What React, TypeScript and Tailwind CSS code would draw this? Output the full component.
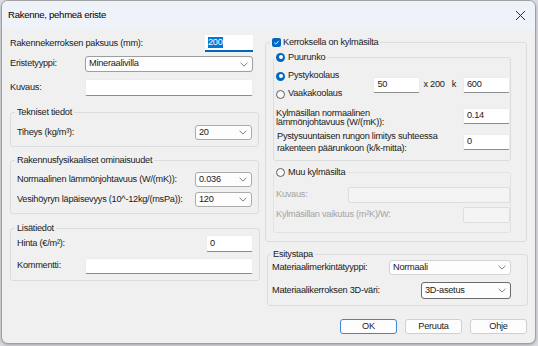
import React from "react";

function Chevron() {
  return (
    <svg width="8" height="5" viewBox="0 0 8 5" className="shrink-0">
      <path d="M0.6 0.8 L4 4.1 L7.4 0.8" fill="none" stroke="#707070" strokeWidth="0.9" />
    </svg>
  );
}

function Select({ value, className }: { value: string; className: string }) {
  return (
    <div className={`flex items-center justify-between bg-[#fdfdfd] rounded-[3px] pl-[3px] pr-[4px] ${className}`}>
      <span>{value}</span>
      <Chevron />
    </div>
  );
}

function TextBox({ value, className }: { value: string; className: string }) {
  return (
    <div className={`flex items-center bg-white border border-[#ececec] border-b-[#8c8c8c] rounded-[2px] px-[3px] ${className}`}>
      {value}
    </div>
  );
}

function Radio({ checked }: { checked: boolean }) {
  return checked ? (
    <span className="w-[9px] h-[9px] rounded-full bg-[#0067c0] flex items-center justify-center shrink-0">
      <span className="w-[4px] h-[4px] rounded-full bg-white" />
    </span>
  ) : (
    <span className="w-[9px] h-[9px] rounded-full border border-[#5e5e5e] bg-[#f7f7f7] shrink-0" />
  );
}

function Checkbox() {
  return (
    <span className="w-[9px] h-[9px] rounded-[2px] bg-[#0067c0] flex items-center justify-center shrink-0">
      <svg width="7" height="7" viewBox="0 0 7 7">
        <path d="M1.2 3.6 L2.8 5.1 L5.8 1.8" fill="none" stroke="#fff" strokeWidth="0.9" />
      </svg>
    </span>
  );
}

export default function App() {
  return (
    <div className="w-[538px] h-[346px] bg-[#dadbe0] overflow-hidden font-['Liberation_Sans',Arial,sans-serif] text-[9.2px] tracking-[-0.25px] text-[#1a1a1a]">
      <div className="ml-[1px] w-[535px] h-[344px] flex flex-col bg-[#f0f0f0] border border-[#a0a0a0] rounded-[7px] overflow-hidden shadow-[0_1px_3px_rgba(0,0,0,0.25)]">
        {/* Title bar */}
        <div className="h-[28px] shrink-0 bg-[#eef3f9] flex items-center justify-between pl-[6px] pr-[8px]">
          <span className="text-[9.6px] tracking-[-0.3px] text-black">Rakenne, pehmeä eriste</span>
          <svg width="11" height="11" viewBox="0 0 11 11" className="mr-[1px]">
            <path d="M1 1 L10 10 M10 1 L1 10" stroke="#2b2b2b" strokeWidth="1" />
          </svg>
        </div>

        {/* Body */}
        <div className="flex items-start gap-[6px] pl-[8px]">
          {/* Left column */}
          <div className="w-[249px] pt-[6px] flex flex-col">
            <div className="h-[17px] flex items-center justify-between pr-[6px]">
              <span>Rakennekerroksen paksuus (mm):</span>
              <div className="w-[48px] h-[17px] bg-white border-b-2 border-[#0067c0] flex items-center px-[3px]">
                <span className="bg-[#0078d7] text-white leading-[11px]">200</span>
              </div>
            </div>
            <div className="mt-[4px] h-[16px] flex items-center">
              <span className="w-[75px]">Eristetyyppi:</span>
              <Select value="Mineraalivilla" className="w-[168px] h-[16px] border border-[#9e9e9e]" />
            </div>
            <div className="mt-[7px] h-[17px] flex items-center">
              <span className="w-[75px]">Kuvaus:</span>
              <TextBox value="" className="w-[168px] h-[17px]" />
            </div>

            <fieldset className="mt-[9px] border border-[#dcdcdc] rounded-[3px]">
              <legend className="ml-[4px] px-[2px] leading-[14px]">Tekniset tiedot</legend>
              <div className="px-[6px] pt-[6px] pb-[6px]">
                <div className="h-[15px] flex items-center justify-between">
                  <span>Tiheys (kg/m³):</span>
                  <Select value="20" className="w-[57px] h-[15px] border border-[#ababab]" />
                </div>
              </div>
            </fieldset>

            <fieldset className="mt-[6px] border border-[#dcdcdc] rounded-[3px]">
              <legend className="ml-[4px] px-[2px] leading-[14px]">Rakennusfysikaaliset ominaisuudet</legend>
              <div className="px-[6px] pt-[5px] pb-[6px] flex flex-col gap-[5px]">
                <div className="h-[15px] flex items-center justify-between">
                  <span>Normaalinen lämmönjohtavuus (W/(mK)):</span>
                  <Select value="0.036" className="w-[57px] h-[15px] border border-[#ababab]" />
                </div>
                <div className="h-[15px] flex items-center justify-between">
                  <span>Vesihöyryn läpäisevyys (10^-12kg/(msPa)):</span>
                  <Select value="120" className="w-[57px] h-[15px] border border-[#ababab]" />
                </div>
              </div>
            </fieldset>

            <fieldset className="mt-[7px] border border-[#dcdcdc] rounded-[3px]">
              <legend className="ml-[4px] px-[2px] leading-[14px]">Lisätiedot</legend>
              <div className="px-[6px] pb-[6px] flex flex-col gap-[6px]">
                <div className="h-[17px] flex items-center justify-between">
                  <span>Hinta (€/m²):</span>
                  <TextBox value="0" className="w-[47px] h-[17px]" />
                </div>
                <div className="h-[16px] flex items-center">
                  <span className="w-[68px]">Kommentti:</span>
                  <TextBox value="" className="w-[168px] h-[16px]" />
                </div>
              </div>
            </fieldset>
          </div>

          {/* Right column */}
          <div className="w-[262px] pt-[7px] flex flex-col">
            <fieldset className="border border-[#dcdcdc] rounded-[3px]">
              <legend className="ml-[4px] px-[2px] leading-[12px]">
                <span className="flex items-center gap-[2px]">
                  <Checkbox />
                  <span>Kerroksella on kylmäsilta</span>
                </span>
              </legend>
              <div className="pl-[7px] pr-[15px] pt-[3px] pb-[8px] flex flex-col">
                <fieldset className="border border-[#dcdcdc] rounded-[3px]">
                  <legend className="px-[2px] leading-[12px]">
                    <span className="flex items-center gap-[3px]">
                      <Radio checked />
                      <span>Puurunko</span>
                    </span>
                  </legend>
                  <div className="pl-[2px] pt-[4px] pb-[6px] flex flex-col">
                    <div className="flex items-center justify-between">
                      <div className="flex flex-col">
                        <div className="h-[18px] flex items-center gap-[3px]">
                          <Radio checked />
                          <span>Pystykoolaus</span>
                        </div>
                        <div className="h-[18px] flex items-center gap-[3px]">
                          <Radio checked={false} />
                          <span>Vaakakoolaus</span>
                        </div>
                      </div>
                      <div className="flex items-center">
                        <TextBox value="50" className="w-[47px] h-[16px]" />
                        <span className="ml-[3px]">x 200</span>
                        <span className="ml-[7px]">k</span>
                        <TextBox value="600" className="ml-[7px] w-[47px] h-[16px]" />
                      </div>
                    </div>
                    <div className="mt-[5px] flex items-start justify-between">
                      <span className="leading-[9px] pt-[1px]">
                        Kylmäsillan normaalinen
                        <br />
                        lämmönjohtavuus (W/(mK)):
                      </span>
                      <TextBox value="0.14" className="w-[47px] h-[16px]" />
                    </div>
                    <div className="mt-[3px] flex items-center justify-between">
                      <span className="leading-[12px] pl-[1px]">
                        Pystysuuntaisen rungon limitys suhteessa
                        <br />
                        rakenteen päärunkoon (k/k-mitta):
                      </span>
                      <TextBox value="0" className="w-[47px] h-[16px]" />
                    </div>
                  </div>
                </fieldset>

                <fieldset className="mt-[5px] border border-[#e2e2e2] rounded-[3px]">
                  <legend className="px-[2px] leading-[12px]">
                    <span className="flex items-center gap-[3px]">
                      <Radio checked={false} />
                      <span>Muu kylmäsilta</span>
                    </span>
                  </legend>
                  <div className="pl-[2px] pt-[9px] pb-[9px] flex flex-col gap-[4px] text-[#a3a3a3]">
                    <div className="h-[16px] flex items-center justify-between">
                      <span>Kuvaus:</span>
                      <div className="w-[162px] h-[16px] bg-[#f4f4f4] border border-[#dedede] rounded-[2px]" />
                    </div>
                    <div className="h-[16px] flex items-center justify-between">
                      <span>Kylmäsillan vaikutus (m²K)/W:</span>
                      <div className="w-[47px] h-[16px] bg-[#f4f4f4] border border-[#dedede] rounded-[2px]" />
                    </div>
                  </div>
                </fieldset>
              </div>
            </fieldset>

            <fieldset className="mt-[6px] ml-[2px] w-[261px] border border-[#dcdcdc] rounded-[3px]">
              <legend className="ml-[3px] px-[2px] leading-[12px]">Esitystapa</legend>
              <div className="pl-[4px] pr-[16px] pb-[6px] flex flex-col gap-[7px]">
                <div className="h-[15px] flex items-center justify-between">
                  <span>Materiaalimerkintätyyppi:</span>
                  <Select value="Normaali" className="w-[122px] h-[15px] border border-[#d4d4d4]" />
                </div>
                <div className="h-[17px] flex items-center justify-between">
                  <span>Materiaalikerroksen 3D-väri:</span>
                  <Select value="3D-asetus" className="w-[90px] h-[17px] border border-[#6a6a6a]" />
                </div>
              </div>
            </fieldset>

            <div className="mt-[13px] flex justify-end gap-[8px]">
              <div className="w-[57px] h-[15px] flex items-center justify-center bg-[#fdfdfd] border border-[#3f86cc] rounded-[3px]">OK</div>
              <div className="w-[57px] h-[15px] flex items-center justify-center bg-[#fdfdfd] border border-[#d0d0d0] rounded-[3px]">Peruuta</div>
              <div className="w-[57px] h-[15px] flex items-center justify-center bg-[#fdfdfd] border border-[#d0d0d0] rounded-[3px]">Ohje</div>
            </div>
          </div>
        </div>
      </div>
    </div>
  );
}
